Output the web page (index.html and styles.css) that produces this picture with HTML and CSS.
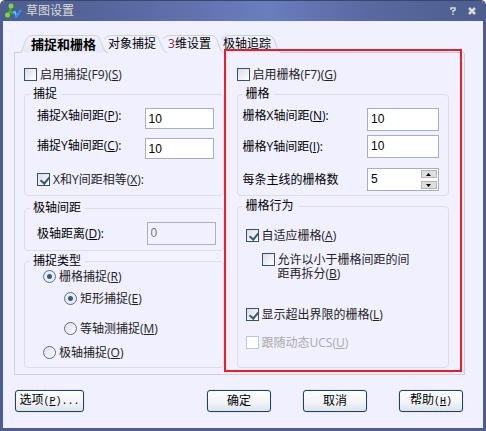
FILE: index.html
```html
<!DOCTYPE html>
<html lang="zh-CN">
<head>
    <meta charset="UTF-8">
    <meta name="viewport" content="width=device-width, initial-scale=1.0">
    <title>草图设置</title>
    <link rel="stylesheet" href="styles.css">
</head>
<body>
    <div class="dialog">
        <div class="titlebar">
            <svg class="app-icon" width="17" height="16" viewBox="0 0 17 16">
                <path d="M6 2 L5 8 L2 12 M5 8 L8 11" stroke="#4fae1c" stroke-width="2" fill="none"/>
                <path d="M7 10 L10 9 L11 14 L16 7" stroke="#2f8fe8" stroke-width="2.5" fill="none" stroke-linejoin="round"/>
                <path d="M8 9.5 L10 8.5 L11 12" stroke="#8fd0ff" stroke-width="1" fill="none"/>
                <circle cx="6" cy="3" r="2.5" fill="#7fd830"/>
                <circle cx="2.5" cy="12" r="2.5" fill="#7fd830"/>
            </svg>
            <h1>草图设置</h1>
            <button class="title-btn" type="button" aria-label="帮助">
                <svg width="6" height="8" viewBox="0 0 6 8"><path d="M1 3 V1 H5 V3 L3 4 V5.5 M3 6.5 V8" stroke="#dcdad2" stroke-width="1.5" fill="none"/></svg>
            </button>
            <button class="title-btn" type="button" aria-label="关闭">
                <svg width="8" height="8" viewBox="0 0 8 8"><path d="M1 1 L7 7 M7 1 L1 7" stroke="#dcdad2" stroke-width="2.5" fill="none"/></svg>
            </button>
        </div>

        <div class="content">
            <div class="tabs" role="tablist">
                <svg class="tab-shapes" width="270" height="19" viewBox="0 0 270 19">
                    <defs>
                        <linearGradient id="active-tab" x1="0" y1="0" x2="0" y2="1">
                            <stop offset="0" stop-color="#f1f1f8"/>
                            <stop offset="1" stop-color="#e6e8f3"/>
                        </linearGradient>
                    </defs>
                    <path class="tab-line" d="M207 4 Q210 .5 214 .5 H255 C262 .5 262 17.5 267 17.5 H270"/>
                    <path class="tab-line" d="M149 4 Q152 .5 156 .5 H198 C205 .5 204 17.5 210 17.5"/>
                    <path class="tab-line" d="M90 4 Q93 .5 97 .5 H140 C147 .5 147 17.5 153 17.5"/>
                    <path class="tab-line active-shape" d="M0 17.5 H7 C11 10 11 .5 18 .5 H81 C88 .5 88 17.5 94 17.5"/>
                </svg>
                <button class="tab active" type="button" role="tab" aria-selected="true">捕捉和栅格</button>
                <button class="tab" type="button" role="tab">对象捕捉</button>
                <button class="tab" type="button" role="tab"><span class="digit">3</span>维设置</button>
                <button class="tab" type="button" role="tab">极轴追踪</button>
            </div>

            <div class="panel">
                <div class="column">
                    <label class="check"><input type="checkbox"><span>启用捕捉(F9)(<u>S</u>)</span></label>

                    <fieldset class="group spacing snap-spacing">
                        <legend>捕捉</legend>
                        <div class="field">
                            <label for="snap-x">捕捉X轴间距(<u>P</u>):</label>
                            <input id="snap-x" type="text" value="10">
                        </div>
                        <div class="field">
                            <label for="snap-y">捕捉Y轴间距(<u>C</u>):</label>
                            <input id="snap-y" type="text" value="10">
                        </div>
                        <label class="check equal"><input type="checkbox" checked><span>X和Y间距相等(<u>X</u>):</span></label>
                    </fieldset>

                    <fieldset class="group polar">
                        <legend>极轴间距</legend>
                        <div class="field">
                            <label for="polar">极轴距离(<u>D</u>):</label>
                            <input id="polar" type="text" value="0" disabled>
                        </div>
                    </fieldset>

                    <fieldset class="group types">
                        <legend>捕捉类型</legend>
                        <label class="check"><input type="radio" name="type" checked><span>栅格捕捉(<u>R</u>)</span></label>
                        <div class="nested">
                            <label class="check"><input type="radio" name="grid-type" checked><span>矩形捕捉(<u>E</u>)</span></label>
                            <label class="check"><input type="radio" name="grid-type"><span>等轴测捕捉(<u>M</u>)</span></label>
                        </div>
                        <label class="check"><input type="radio" name="type"><span>极轴捕捉(<u>O</u>)</span></label>
                    </fieldset>
                </div>

                <div class="column">
                    <label class="check"><input type="checkbox"><span>启用栅格(F7)(<u>G</u>)</span></label>

                    <fieldset class="group spacing grid-spacing">
                        <legend>栅格</legend>
                        <div class="field">
                            <label for="grid-x">栅格X轴间距(<u>N</u>):</label>
                            <input id="grid-x" type="text" value="10">
                        </div>
                        <div class="field">
                            <label for="grid-y">栅格Y轴间距(<u>I</u>):</label>
                            <input id="grid-y" type="text" value="10">
                        </div>
                        <div class="field major">
                            <label for="major">每条主线的栅格数</label>
                            <div class="spinner">
                                <input id="major" type="text" value="5">
                                <div class="arrows">
                                    <button type="button" aria-label="增加"><svg width="5" height="3"><path d="M0 3 L2.5 0 L5 3z"/></svg></button>
                                    <button type="button" aria-label="减少"><svg width="5" height="3"><path d="M0 0 L2.5 3 L5 0z"/></svg></button>
                                </div>
                            </div>
                        </div>
                    </fieldset>

                    <fieldset class="group behavior">
                        <legend>栅格行为</legend>
                        <label class="check"><input type="checkbox" checked><span>自适应栅格(<u>A</u>)</span></label>
                        <label class="check sub"><input type="checkbox"><span>允许以小于栅格间距的间<br>距再拆分(<u>B</u>)</span></label>
                        <label class="check limits"><input type="checkbox" checked><span>显示超出界限的栅格(<u>L</u>)</span></label>
                        <label class="check disabled"><input type="checkbox" disabled><span>跟随动态UCS(<u>U</u>)</span></label>
                    </fieldset>
                </div>

                <div class="highlight"></div>
            </div>

            <div class="buttons">
                <button class="btn options" type="button">选项<span class="key">(<u>P</u>)...</span></button>
                <button class="btn" type="button">确定</button>
                <button class="btn" type="button">取消</button>
                <button class="btn" type="button">帮助<span class="key">(<u>H</u>)</span></button>
            </div>
        </div>
    </div>
</body>
</html>
```

FILE: styles.css
```css
* {
    margin: 0;
    padding: 0;
    box-sizing: border-box;
}

body {
    font-family: "Open Sans", "Noto Sans CJK SC", sans-serif;
    font-size: 12px;
    line-height: 14px;
    color: #000;
    background: #fff;
}

button, input {
    font: inherit;
    color: inherit;
}

.dialog {
    min-height: 100vh;
    display: flex;
    flex-direction: column;
    border: 3px solid #4d5d8d;
    border-top: 0;
    border-radius: 5px 5px 0 0;
    background: #f1f0ff;
    overflow: hidden;
}

.titlebar {
    display: flex;
    align-items: center;
    gap: 10px;
    height: 21px;
    padding: 0 7px 0 2px;
    border-top: 1px solid #39466f;
    background: linear-gradient(90deg, #4d5d8d 0%, #5868a0 25%, #6a7dbd 55%, #5a6aa2 75%, #4d5d8d 100%);
    color: #dcdad2;
}

.titlebar h1 {
    flex: 1;
    margin-left: -6px;
    font-size: 12px;
    font-weight: normal;
}

.title-btn {
    display: flex;
    border: 0;
    background: none;
}

.title-btn:last-child {
    margin-left: 2px;
}

.content {
    flex: 1;
    padding: 14px 18px 14px 11px;
}

.tabs {
    position: relative;
    display: flex;
    gap: 12px;
    height: 18px;
    padding-left: 17px;
}

.tab-shapes {
    position: absolute;
    left: 0;
    top: 0;
}

.tab-line {
    fill: none;
    stroke: #c8d4d4;
}

.active-shape {
    fill: url(#active-tab);
}

.tab {
    position: relative;
    border: 0;
    background: none;
    white-space: nowrap;
}

.tab.active {
    font-size: 13px;
    font-weight: bold;
}

.digit {
    color: #7a3030;
}

.panel {
    position: relative;
    display: grid;
    grid-template-columns: 200fr 213fr;
    gap: 13px;
    padding: 15px 15px 6px 9px;
    border: 1px solid #c8d4d4;
    border-top: 0;
}

/* top edge starts where the last tab ends */
.panel::before {
    content: "";
    position: absolute;
    left: 267px;
    right: 0;
    top: -1px;
    border-top: 1px solid #c8d4d4;
}

.column {
    display: flex;
    flex-direction: column;
}

.check {
    display: flex;
    align-items: flex-start;
    gap: 3px;
    color: #222;
}

.check.disabled {
    color: #aaa;
}

input[type="checkbox"],
input[type="radio"] {
    appearance: none;
    flex: none;
    width: 13px;
    height: 13px;
    border: 1px solid #34526e;
    background: linear-gradient(135deg, #dcdce4, #fff);
}

input[type="checkbox"]:checked::before {
    content: "";
    display: block;
    width: 4px;
    height: 7px;
    margin: 1px 0 0 4px;
    border: solid #3f5878;
    border-width: 0 2px 2px 0;
    transform: rotate(40deg);
}

input[type="checkbox"]:disabled {
    border-color: #b9c8d6;
    background: #fff;
}

input[type="radio"] {
    border-radius: 50%;
    border-color: #54708c;
}

input[type="radio"]:checked {
    background: radial-gradient(circle, #3f5878 0 2px, #e8ecf4 3px);
}

.group {
    min-width: 0;
    padding-left: 5px;
    border: 1px solid #dcdfe2;
    border-radius: 4px;
}

.group legend {
    padding: 0 4px 0 3px;
}

.field {
    display: flex;
    justify-content: space-between;
}

input[type="text"] {
    width: 69px;
    height: 21px;
    padding: 1px 3px 0;
    border: 1px solid #a4b0bc;
    background: #fff;
    font-family: "Liberation Sans", sans-serif;
}

input[type="text"]:disabled {
    height: 23px;
    padding-bottom: 3px;
    border-color: #abb0bf;
    background: #f1f0ff;
    color: #777;
}

.spacing {
    height: 109px;
    margin-top: 5px;
    padding-top: 7px;
    padding-right: 9px;
}

.snap-spacing > .field,
.snap-spacing > .check,
.polar > .field {
    margin-left: 7px;
}

.snap-spacing .field {
    height: 30px;
}

.field label {
    padding-top: 1px;
}

.grid-spacing .field {
    height: 27px;
}

.grid-spacing .field + .field {
    align-items: center;
    height: 23px;
}

.grid-spacing .field.major {
    margin-top: 10px;
}

.grid-spacing input[type="text"] {
    width: 72px;
    height: 23px;
    padding-bottom: 3px;
}

.snap-spacing > .equal {
    margin-top: 5px;
}

.polar {
    height: 50px;
    margin-top: 5px;
    padding-top: 7px;
    padding-right: 7px;
}

.polar .field {
    align-items: center;
}

.types {
    height: 114px;
    margin-top: 3px;
    padding-top: 2px;
}

.types > * {
    margin-left: 13px;
}

.types > legend {
    margin-left: 0;
}

.types > .nested {
    display: flex;
    flex-direction: column;
    gap: 16px;
    margin: 8px 0 10px 34px;
}

.spinner {
    position: relative;
    height: 23px;
}

.arrows {
    position: absolute;
    top: 2px;
    right: 2px;
    display: flex;
    flex-direction: column;
    gap: 3px;
}

.arrows button {
    display: flex;
    align-items: center;
    justify-content: center;
    width: 16px;
    height: 8px;
    border: 1px solid #b4b4b4;
    background: #dedede;
}

.behavior {
    flex: 1;
    margin-top: 3px;
    padding-top: 16px;
}

.behavior > .check {
    margin-left: 3px;
}

.behavior > .sub {
    margin-top: 10px;
    margin-left: 19px;
}

.behavior > .limits {
    margin-top: 27px;
    margin-bottom: 14px;
}

/* red callout frame over the grid settings */
.highlight {
    position: absolute;
    left: 209px;
    right: 2px;
    top: -4px;
    bottom: 2px;
    border: 2px solid #ee1c24;
    pointer-events: none;
}

.buttons {
    display: flex;
    gap: 32px;
    margin-top: 15px;
    padding: 0 2px 0 1px;
}

.btn {
    width: 64px;
    height: 22px;
    border: 1px solid #24405f;
    border-radius: 3px;
    background: linear-gradient(#fff, #f0f3f8 60%, #dde3ec);
    box-shadow: 0 0 1px #7f9fc8;
}

.options {
    width: 69px;
    margin-right: auto;
}

.key {
    font-family: "Liberation Mono", monospace;
    font-size: 10px;
}
```
